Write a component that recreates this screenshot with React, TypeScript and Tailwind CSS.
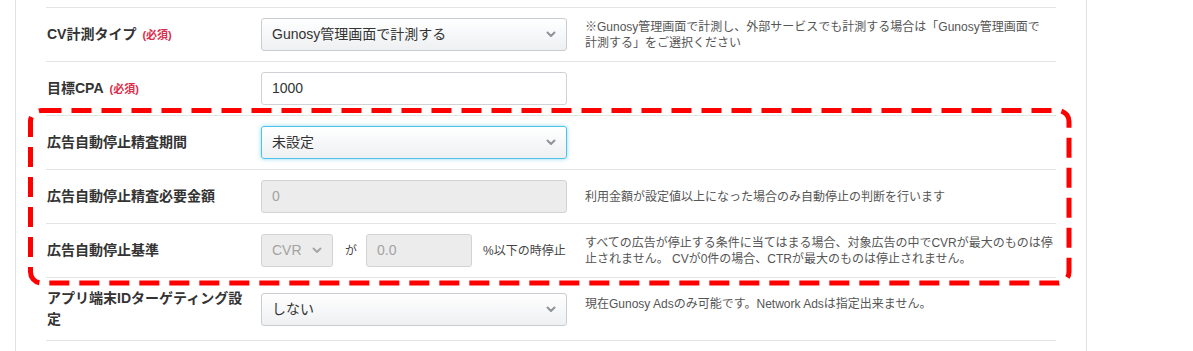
import React from 'react';

const font = { fontFamily: '"Liberation Sans", "Noto Sans CJK JP", sans-serif' };

function Chevron({ color = '#8f949a' }: { color?: string }) {
  return (
    <svg width="10" height="7" viewBox="0 0 10 7" className="shrink-0">
      <polyline points="1.5,1.5 5,5 8.5,1.5" fill="none" stroke={color} strokeWidth="2" strokeLinecap="round" strokeLinejoin="round" />
    </svg>
  );
}

function Select({ value, focused = false, disabled = false, width = 'w-[306px]' }: { value: string; focused?: boolean; disabled?: boolean; width?: string }) {
  const base = 'h-[33px] flex items-center justify-between pl-[10px] pr-[10px] rounded-[3px] text-[14px] border';
  const look = disabled
    ? 'bg-[#ececec] border-[#d3d3d3] text-[#a3a3a3]'
    : focused
      ? 'bg-gradient-to-b from-white to-[#eef0f2] border-[#4cc3ea] text-[#333] shadow-[0_0_4px_rgba(76,195,234,0.6)]'
      : 'bg-gradient-to-b from-white to-[#eef0f2] border-[#c9cdd2] text-[#333]';
  return (
    <div className={`${base} ${look} ${width}`}>
      <span>{value}</span>
      <Chevron color={disabled ? '#a8a8a8' : '#8f949a'} />
    </div>
  );
}

function Input({ value, disabled = false, width = 'w-[306px]' }: { value: string; disabled?: boolean; width?: string }) {
  return (
    <div
      className={`h-[33px] flex items-center pl-[10px] rounded-[3px] text-[14px] border ${width} ${
        disabled ? 'bg-[#ececec] border-[#d3d3d3] text-[#a3a3a3]' : 'bg-white border-[#cfd2d6] text-[#333]'
      }`}
    >
      {value}
    </div>
  );
}

function Label({ children, required = false }: { children: React.ReactNode; required?: boolean }) {
  return (
    <div className="w-[215px] shrink-0 pl-[1px] pr-[10px] text-[14px] font-bold text-[#333] leading-[21px]">
      {children}
      {required && <span className="ml-[6px] text-[11px] text-[#dc2e4d]">(必須)</span>}
    </div>
  );
}

function Help({ children, className = '' }: { children: React.ReactNode; className?: string }) {
  return <div className={`ml-[18px] text-[12px] leading-[16px] text-[#555] whitespace-nowrap ${className}`}>{children}</div>;
}

export default function App() {
  return (
    <div className="relative w-full h-[351px] bg-white overflow-hidden" style={font}>
      <div className="ml-[15px] w-[1072px] h-full border-l border-r border-[#dfe1e6] px-[30px]">
        <div className="h-[8px] border-b border-[#e4e4e4]" />

        {/* CV計測タイプ */}
        <div className="h-[54px] flex items-center border-b border-[#e4e4e4]">
          <Label required>CV計測タイプ</Label>
          <Select value="Gunosy管理画面で計測する" />
          <Help>
            ※Gunosy管理画面で計測し、外部サービスでも計測する場合は「Gunosy管理画面で
            <br />
            計測する」をご選択ください
          </Help>
        </div>

        {/* 目標CPA */}
        <div className="h-[54px] flex items-center border-b border-[#e4e4e4]">
          <Label required>目標CPA</Label>
          <Input value="1000" />
        </div>

        {/* 広告自動停止 */}
        <div className="h-[54px] flex items-center border-b border-[#e4e4e4]">
          <Label>広告自動停止精査期間</Label>
          <Select value="未設定" focused />
        </div>

        <div className="h-[54px] flex items-center border-b border-[#e4e4e4]">
          <Label>広告自動停止精査必要金額</Label>
          <Input value="0" disabled />
          <Help>利用金額が設定値以上になった場合のみ自動停止の判断を行います</Help>
        </div>

        <div className="h-[54px] flex items-center border-b border-[#e4e4e4]">
          <Label>広告自動停止基準</Label>
          <div className="w-[306px] flex items-center text-[12px] text-[#444]">
            <Select value="CVR" disabled width="w-[72px]" />
            <span className="ml-[12px]">が</span>
            <div className="ml-[9px]">
              <Input value="0.0" disabled width="w-[106px]" />
            </div>
            <span className="ml-[11px] whitespace-nowrap">%以下の時停止</span>
          </div>
          <Help>
            すべての広告が停止する条件に当てはまる場合、対象広告の中でCVRが最大のものは停
            <br />
            止されません。 CVが0件の場合、CTRが最大のものは停止されません。
          </Help>
        </div>

        {/* アプリ端末ID */}
        <div className="h-[63px] flex items-center border-b border-[#e4e4e4]">
          <Label>
            アプリ端末IDターゲティング設
            <br />
            定
          </Label>
          <Select value="しない" />
          <Help className="mb-[11px]">現在Gunosy Adsのみ可能です。Network Adsは指定出来ません。</Help>
        </div>
      </div>

      {/* annotation */}
      <svg className="absolute left-0 top-0 pointer-events-none" width="1193" height="351">
        <rect
          x="30.5"
          y="110.5"
          width="1038.5"
          height="172.5"
          rx="11"
          fill="none"
          stroke="#ff0000"
          strokeWidth="5"
          strokeDasharray="20 10"
        />
      </svg>
    </div>
  );
}
